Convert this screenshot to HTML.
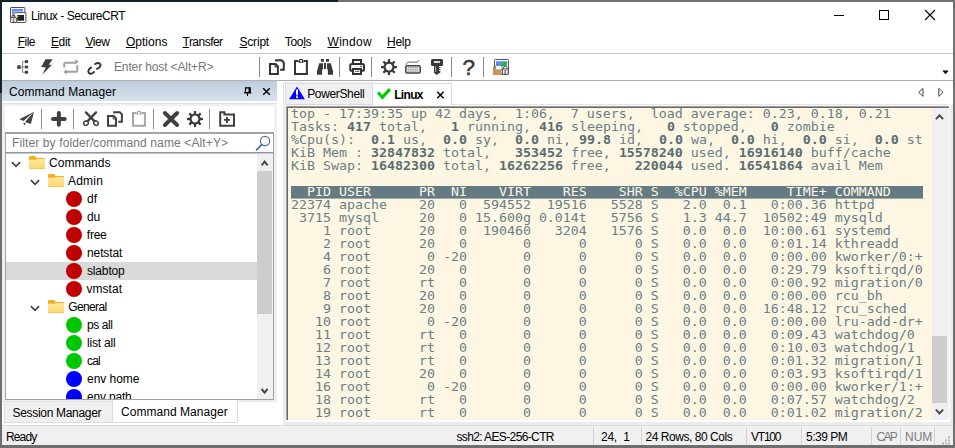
<!DOCTYPE html>
<html lang="en">
<head>
<meta charset="utf-8">
<title>Linux - SecureCRT</title>
<style>
html,body{margin:0;padding:0}
body{width:955px;height:448px;overflow:hidden;position:relative;background:#f0f0f0;font-family:"Liberation Sans",sans-serif;font-size:12px;line-height:14px;color:#000}
div,span,svg{position:absolute;box-sizing:border-box}
.t{white-space:pre;line-height:14px;font-size:12px}
.t u{text-decoration:underline;text-underline-offset:1px}
.sep{width:1px;background:#8c8c8c}
#term{left:288px;top:108px;width:644px;height:312px;background:#fdf6e3;overflow:hidden}
#term div{left:3px;width:640px;height:14.444px;margin:0;font-family:"DejaVu Sans Mono","Liberation Mono",monospace;font-size:13.29px;line-height:14.444px;color:#6a8088;white-space:pre;transform:scaleY(0.9);transform-origin:0 0}
#term b{color:#586e75;font-weight:bold}
#term .h{background:#657b83;color:#fdf6e3;width:632px}
.row{left:6px;width:251px;height:18px}
.dot{width:16px;height:16px;border-radius:50%}
</style>
</head>
<body>
<svg width="0" height="0" style="left:0;top:0"><defs><linearGradient id="fg" x1="0" y1="0" x2="0" y2="1"><stop offset="0" stop-color="#ffe9a6"/><stop offset="1" stop-color="#fdd566"/></linearGradient></defs></svg>
<!-- window frame -->
<div style="left:2px;top:2px;width:951px;height:51px;background:#fff"></div>
<div style="left:2px;top:53px;width:951px;height:1px;background:#c6c6c6"></div>
<div style="left:2px;top:54px;width:951px;height:26px;background:#fff"></div>
<div style="left:2px;top:80px;width:951px;height:1px;background:#b0b0b0"></div>

<!-- app icon -->
<svg style="left:9px;top:6px" width="19" height="19" viewBox="9 6 19 19">
<rect x="10.5" y="7.5" width="14.4" height="11" rx="0.6" fill="#fff" stroke="#505050"/>
<path d="M12 9H23V11.6H13.6V14.5H12Z" fill="#5b8cff"/>
<rect x="14" y="12.6" width="11.9" height="9.9" rx="0.6" fill="#fff" stroke="#505050"/>
<rect x="17.2" y="15" width="6.8" height="5.7" fill="#222"/>
<rect x="17.2" y="15.8" width="1.3" height="1.2" fill="#f5b800"/>
<path d="M12 18v-1.2a1.5 1.5 0 0 1 3 0V18" fill="none" stroke="#505050" stroke-width="1.1"/>
<rect x="10.6" y="17.6" width="5.8" height="4.9" rx="0.5" fill="#f4f4f4" stroke="#505050" stroke-width="1"/>
<rect x="12.7" y="18.7" width="1.6" height="1.2" fill="#444"/><rect x="12.7" y="20.6" width="1.6" height="1.2" fill="#444"/>
</svg>

<!-- window controls -->
<div style="left:834px;top:15px;width:10px;height:1px;background:#000"></div>
<div style="left:879px;top:10px;width:10px;height:10px;border:1px solid #000"></div>
<svg style="left:924px;top:9px" width="12" height="12" viewBox="0 0 12 12"><path d="M1 1l10 10M11 1L1 11" stroke="#000" stroke-width="1.1" fill="none"/></svg>

<!-- toolbar icons -->
<svg style="left:16px;top:58px" width="14" height="18" viewBox="16 58 14 18">
<path d="M20.5 67.2H22.6M22.6 61.7V72.3M22.6 61.7H25M22.6 67H25M22.6 72.3H25" stroke="#8a8a8a" stroke-width="1" fill="none"/>
<rect x="17.2" y="65.3" width="3.5" height="3.6" fill="#444"/>
<rect x="24.9" y="60.2" width="3.2" height="2.9" fill="#444"/>
<rect x="24.9" y="65.6" width="3.2" height="2.8" fill="#444"/>
<rect x="24.9" y="70.8" width="3.2" height="2.9" fill="#444"/>
</svg>
<svg style="left:40px;top:58px" width="15" height="18" viewBox="40 58 15 18">
<path d="M45.4 59.3H52.7L48.7 64.7H52L42.2 74.7L45.9 67.3H41.2Z" fill="#3c3c3c"/>
</svg>
<svg style="left:62px;top:58px" width="19" height="18" viewBox="62 58 19 18">
<path d="M64.2 67.4V63.9a1.2 1.2 0 0 1 1.2-1.2H76" stroke="#a0a0a0" stroke-width="2" fill="none"/>
<path d="M75.3 59.1L78.8 61.7L75.3 64.3Z" fill="#a0a0a0"/>
<path d="M77.3 65.3V70.6a1.2 1.2 0 0 1-1.2 1.2H66" stroke="#a0a0a0" stroke-width="2" fill="none"/>
<path d="M66.7 69.3L63.2 71.9L66.7 74.6Z" fill="#a0a0a0"/>
</svg>
<svg style="left:86px;top:60px" width="17" height="17" viewBox="86 60 17 17">
<path d="M91 67.6C88.4 69.2 87.6 71.6 89 73C90.4 74.4 92.6 73.6 94 71.9" stroke="#333" stroke-width="1.9" fill="none" stroke-linecap="round"/>
<path d="M95.3 63.9C97.4 62.6 99.4 62.8 100.3 64.2C101.2 65.8 99.8 68 96.9 68.8" stroke="#333" stroke-width="1.9" fill="none" stroke-linecap="round"/>
</svg>

<div class="sep" style="left:259px;top:57px;height:20px"></div>
<!-- copy -->
<svg style="left:268px;top:58px" width="19" height="18" viewBox="268 58 19 18">
<path d="M276.1 61.6V60.3H281.6L283.8 62.5V69.8H280.1" stroke="#333" stroke-width="2" fill="none"/>
<path d="M270 64.1H275.6L277.9 66.4V73.9H270Z" stroke="#333" stroke-width="2" fill="#fff"/>
<path d="M275 64.5V67H277.6" stroke="#333" stroke-width="1" fill="none"/>
</svg>
<!-- clipboard -->
<svg style="left:293px;top:58px" width="17" height="18" viewBox="293 58 17 18">
<path d="M298.5 61.1H295V73.9H306.9V61.1H303.5" stroke="#333" stroke-width="2" fill="none"/>
<path d="M298.4 62.7L299.4 59H302.6L303.6 62.7Z" fill="#333"/>
<rect x="300.1" y="60" width="1.8" height="1.8" fill="#fff"/>
</svg>
<!-- binoculars -->
<svg style="left:316px;top:58px" width="19" height="18" viewBox="316 58 19 18">
<path d="M320.9 59H323.9V61.8H320.9ZM326 59H329V61.8H326Z" fill="#3a3a3a"/>
<path d="M319.2 63.2H323V68.6L322.1 70V74.8H317V71Z" fill="#3a3a3a"/>
<path d="M330.8 63.2H327V68.6L327.9 70V74.8H333V71Z" fill="#3a3a3a"/>
<path d="M324 63H326V69H324Z" fill="#3a3a3a"/>
</svg>
<div class="sep" style="left:339px;top:57px;height:20px"></div>
<!-- printer -->
<svg style="left:348px;top:58px" width="19" height="18" viewBox="348 58 19 18">
<path d="M353 63.5V60.1H361V63.5" stroke="#333" stroke-width="2" fill="none"/>
<rect x="350.2" y="64" width="13.8" height="6.8" rx="1.6" fill="#fff" stroke="#333" stroke-width="2"/>
<rect x="353" y="69" width="8" height="5" fill="#fff" stroke="#333" stroke-width="2"/>
<rect x="359.8" y="65.8" width="2.2" height="1" fill="#333"/>
<rect x="355" y="70.8" width="4.4" height="1" fill="#555"/>
</svg>
<div class="sep" style="left:371px;top:57px;height:20px"></div>
<!-- gear -->
<svg style="left:380px;top:58px" width="18" height="18" viewBox="-9 -9.1 18 18">
<g fill="#3a3a3a"><rect x="-1.15" y="-8" width="2.3" height="16"/><rect x="-1.15" y="-8" width="2.3" height="16" transform="rotate(45)"/><rect x="-1.15" y="-8" width="2.3" height="16" transform="rotate(90)"/><rect x="-1.15" y="-8" width="2.3" height="16" transform="rotate(135)"/></g>
<circle r="4.5" fill="#fff" stroke="#3a3a3a" stroke-width="2.2"/>
</svg>
<!-- keyboard -->
<svg style="left:404px;top:59px" width="19" height="16" viewBox="404 59 19 16">
<path d="M406 64.8C406.6 62.8 407.4 62.1 409 62.1H416.8C418 62.1 418.4 61.4 418.6 60.2" stroke="#555" stroke-width="0.9" fill="none"/>
<rect x="405.8" y="65.8" width="14.4" height="7.2" rx="1.3" fill="#e6e6e6" stroke="#444" stroke-width="1.5"/>
<path d="M407.6 67.6h10.8M407.6 69.4h10.8M407.6 71.2h10.8" stroke="#9a9a9a" stroke-width="1" stroke-dasharray="1.3 0.5"/>
</svg>
<!-- key -->
<svg style="left:430px;top:58px" width="15" height="18" viewBox="430 58 15 18">
<path d="M432.5 59.1H441.5a1.5 1.5 0 0 1 1.5 1.5V64.4a1.5 1.5 0 0 1-1.5 1.5H439V67H440.4V68H439V69H440.4V70H439V71H440.4V72.4L436.5 74.9L434 72.8V65.9H432.5a1.5 1.5 0 0 1-1.5-1.5V60.6a1.5 1.5 0 0 1 1.5-1.5Z" fill="#3a3a3a"/>
<rect x="434" y="61.2" width="6.1" height="1.6" fill="#fff"/>
<rect x="435.3" y="66.5" width="0.8" height="5.2" fill="#ddd"/>
</svg>
<div class="sep" style="left:451px;top:57px;height:20px"></div>
<!-- question -->
<span class="t" style="left:462.6px;top:55.8px;font-size:22.5px;line-height:24px;color:#3a3a3a;-webkit-text-stroke:0.55px #3a3a3a;transform:scaleX(1.0);transform-origin:0 0">?</span>
<div class="sep" style="left:483px;top:57px;height:20px"></div>
<!-- coloured icon -->
<svg style="left:492px;top:58px" width="18" height="18" viewBox="492 58 18 18">
<rect x="494.5" y="59.5" width="14" height="14.5" rx="0.8" fill="#fff" stroke="#555"/>
<rect x="496" y="61.2" width="11" height="4.8" fill="#5b8cff"/>
<path d="M495.6 65.4H500.4L502 67V70.2H495.6Z" fill="#fff" stroke="#666" stroke-width="0.7"/>
<path d="M501 64.6L503.4 62.4L506.8 62L507 63.2L502.6 67Z" fill="#00d000"/>
<path d="M493 66.8H494.6V69.6H501.6V75H493Z" fill="#c8965c"/>
<rect x="502.4" y="69" width="5.8" height="5.4" fill="#f4f4f4" stroke="#444" stroke-width="0.9"/>
<path d="M503.6 69v-1.2a1.7 1.7 0 0 1 3.4 0V69" fill="none" stroke="#444" stroke-width="1"/>
<rect x="504.5" y="70.2" width="1.6" height="1.3" fill="#333"/><rect x="504.5" y="72.3" width="1.6" height="1.3" fill="#333"/>
</svg>
<!-- overflow arrow -->
<svg style="left:942px;top:70px" width="7" height="5" viewBox="0 0 7 5"><path d="M0.3 0.5H6.7L3.5 4.3Z" fill="#000"/></svg>

<!-- left panel -->
<div style="left:2px;top:81px;width:275px;height:20px;background:linear-gradient(#bfccdb,#d6e2ef)"></div>
<div style="left:2px;top:101px;width:281px;height:2px;background:#fff"></div>
<div style="left:277px;top:81px;width:6px;height:344px;background:#fff"></div>
<div style="left:2px;top:103px;width:275px;height:1px;background:#e3e3e3"></div>
<!-- pin -->
<svg style="left:243px;top:86px" width="10" height="11" viewBox="243 86 10 11">
<path d="M245.5 87.8H250.2V92.6H245.5Z" fill="none" stroke="#000" stroke-width="1.2"/>
<path d="M249.4 87.5V92.6" stroke="#000" stroke-width="1.6"/>
<path d="M244 92.7H251.2" stroke="#000" stroke-width="1.3"/>
<path d="M247.5 93V96" stroke="#000" stroke-width="1.1"/>
</svg>
<svg style="left:262px;top:87px" width="9" height="9" viewBox="0 0 9 9"><path d="M1.2 1.2L7.8 7.8M7.8 1.2L1.2 7.8" stroke="#000" stroke-width="1.5" fill="none"/></svg>
<!-- white box -->
<div style="left:5px;top:106px;width:269px;height:26px;background:#fff"></div>
<!-- mini toolbar icons -->
<svg style="left:18px;top:110px" width="18" height="18" viewBox="18 110 18 18">
<path d="M34 111.8L19.4 119.3L23.4 120.9Z" fill="#444"/>
<path d="M34 111.8L25 122.1L30.9 124Z" fill="#444"/>
<path d="M23.1 122.4L25.9 123.4L24.4 125.6Z" fill="#444"/>
</svg>
<div class="sep" style="left:41px;top:109px;height:20px"></div>
<svg style="left:50px;top:110px" width="18" height="18" viewBox="50 110 18 18"><path d="M58.85 113V124.8M53 118.9H64.7" stroke="#404040" stroke-width="4" stroke-linecap="round"/></svg>
<div class="sep" style="left:73px;top:109px;height:20px"></div>
<!-- scissors -->
<svg style="left:82px;top:110px" width="18" height="18" viewBox="82 110 18 18">
<path d="M85.9 112.4L94.6 121.4M96 112.4L87.4 121.4" stroke="#404040" stroke-width="2.3" stroke-linecap="round" fill="none"/>
<ellipse cx="86" cy="123.2" rx="2.4" ry="2.1" transform="rotate(-35 86 123.2)" fill="#fff" stroke="#404040" stroke-width="1.5"/>
<ellipse cx="96" cy="123.2" rx="2.4" ry="2.1" transform="rotate(35 96 123.2)" fill="#fff" stroke="#404040" stroke-width="1.5"/>
</svg>
<!-- copy -->
<svg style="left:106px;top:110px" width="18" height="18" viewBox="106 110 18 18">
<path d="M114.2 113.6V112.2H119.8L121.9 114.3V121.8H118.2" stroke="#404040" stroke-width="2" fill="none"/>
<path d="M108 116.1H113.8L116 118.3V125.8H108Z" stroke="#404040" stroke-width="2" fill="#fff"/>
<path d="M113.2 116.5V119H115.8" stroke="#404040" stroke-width="1" fill="none"/>
</svg>
<!-- clipboard gray -->
<svg style="left:131px;top:110px" width="17" height="18" viewBox="131 110 17 18">
<path d="M136.5 113H133V125.8H144.9V113H141.5" stroke="#a6a6a6" stroke-width="2" fill="none"/>
<path d="M136.3 114.6L137.3 111H140.7L141.7 114.6Z" fill="#a6a6a6"/>
<rect x="138.1" y="112" width="1.8" height="1.8" fill="#fff"/>
</svg>
<div class="sep" style="left:153px;top:109px;height:20px"></div>
<svg style="left:161px;top:109px" width="20" height="20" viewBox="161 109 20 20"><path d="M164.9 113L177.1 125M177.1 113L164.9 125" stroke="#404040" stroke-width="4" stroke-linecap="round"/></svg>
<svg style="left:186px;top:110px" width="18" height="18" viewBox="-9 -9 18 18">
<g fill="#3a3a3a"><rect x="-1.15" y="-8" width="2.3" height="16"/><rect x="-1.15" y="-8" width="2.3" height="16" transform="rotate(45)"/><rect x="-1.15" y="-8" width="2.3" height="16" transform="rotate(90)"/><rect x="-1.15" y="-8" width="2.3" height="16" transform="rotate(135)"/></g>
<circle r="4.5" fill="#fff" stroke="#3a3a3a" stroke-width="2.2"/>
</svg>
<div class="sep" style="left:209px;top:109px;height:20px"></div>
<!-- folder plus -->
<svg style="left:218px;top:110px" width="19" height="18" viewBox="218 110 19 18">
<path d="M220.2 125.8V112.2H224.4V114.4H234V125.8Z" fill="#fff" stroke="#404040" stroke-width="2"/>
<path d="M227 116.9V122.9M224 119.9H230" stroke="#404040" stroke-width="1.9"/>
</svg>
<!-- filter box -->
<div style="left:5px;top:132px;width:269px;height:21px;background:#fff;border:1px solid #a3a3a3;border-top-width:2px;border-bottom-color:#8e96a3"></div>
<svg style="left:255px;top:135px" width="17" height="16" viewBox="255 135 17 16">
<circle cx="265" cy="141" r="4.6" fill="#fff" stroke="#4f6fa0" stroke-width="1.2"/>
<path d="M261.6 144.6L256.6 149.8" stroke="#4f6fa0" stroke-width="1.8" stroke-linecap="round"/>
</svg>
<!-- tree box -->
<div style="left:5px;top:153px;width:269px;height:247px;background:#fff;border:1px solid #a0a0a0;border-top:none"></div>
<div style="left:6px;top:153px;width:251px;height:246px;overflow:hidden">
<div class="row" style="left:0;top:109px;background:#d9d9d9"></div>
<svg style="left:5.4px;top:6.5px" width="10" height="8" viewBox="0 0 10 8"><path d="M0.9 2.1L5 6.3L9.1 2.1" stroke="#404040" stroke-width="1.6" fill="none"/></svg>
<svg style="left:23px;top:2.9px" width="16" height="13" viewBox="0 0 16 13"><path d="M0 1.2a1.2 1.2 0 0 1 1.2-1.2H5.6a1.2 1.2 0 0 1 1 0.5L7.8 2H15a1 1 0 0 1 1 1V5H0Z" fill="#f0b21a"/><path d="M0 3.8H6.6L7.8 2.9H16V11.8a1.2 1.2 0 0 1-1.2 1.2H1.2a1.2 1.2 0 0 1-1.2-1.2Z" fill="url(#fg)"/><path d="M0.2 12.2a1.2 1.2 0 0 0 1 0.6H14.8a1.2 1.2 0 0 0 1-0.6" fill="none" stroke="#e8b03c" stroke-width="0.6"/></svg>
<svg style="left:24.4px;top:24.5px" width="10" height="8" viewBox="0 0 10 8"><path d="M0.9 2.1L5 6.3L9.1 2.1" stroke="#404040" stroke-width="1.6" fill="none"/></svg>
<svg style="left:42px;top:20.9px" width="16" height="13" viewBox="0 0 16 13"><path d="M0 1.2a1.2 1.2 0 0 1 1.2-1.2H5.6a1.2 1.2 0 0 1 1 0.5L7.8 2H15a1 1 0 0 1 1 1V5H0Z" fill="#f0b21a"/><path d="M0 3.8H6.6L7.8 2.9H16V11.8a1.2 1.2 0 0 1-1.2 1.2H1.2a1.2 1.2 0 0 1-1.2-1.2Z" fill="url(#fg)"/><path d="M0.2 12.2a1.2 1.2 0 0 0 1 0.6H14.8a1.2 1.2 0 0 0 1-0.6" fill="none" stroke="#e8b03c" stroke-width="0.6"/></svg>
<div class="dot" style="left:60px;top:37.5px;background:#c00000"></div>
<div class="dot" style="left:60px;top:55.5px;background:#c00000"></div>
<div class="dot" style="left:60px;top:73.5px;background:#c00000"></div>
<div class="dot" style="left:60px;top:91.5px;background:#c00000"></div>
<div class="dot" style="left:60px;top:109.5px;background:#c00000"></div>
<div class="dot" style="left:60px;top:127.5px;background:#c00000"></div>
<svg style="left:24.4px;top:150.5px" width="10" height="8" viewBox="0 0 10 8"><path d="M0.9 2.1L5 6.3L9.1 2.1" stroke="#404040" stroke-width="1.6" fill="none"/></svg>
<svg style="left:42px;top:146.9px" width="16" height="13" viewBox="0 0 16 13"><path d="M0 1.2a1.2 1.2 0 0 1 1.2-1.2H5.6a1.2 1.2 0 0 1 1 0.5L7.8 2H15a1 1 0 0 1 1 1V5H0Z" fill="#f0b21a"/><path d="M0 3.8H6.6L7.8 2.9H16V11.8a1.2 1.2 0 0 1-1.2 1.2H1.2a1.2 1.2 0 0 1-1.2-1.2Z" fill="url(#fg)"/><path d="M0.2 12.2a1.2 1.2 0 0 0 1 0.6H14.8a1.2 1.2 0 0 0 1-0.6" fill="none" stroke="#e8b03c" stroke-width="0.6"/></svg>
<div class="dot" style="left:60px;top:163.5px;background:#00c800"></div>
<div class="dot" style="left:60px;top:181.5px;background:#00c800"></div>
<div class="dot" style="left:60px;top:199.5px;background:#00c800"></div>
<div class="dot" style="left:60px;top:217.5px;background:#0000ff"></div>
<div class="dot" style="left:60px;top:235.5px;background:#0000ff"></div>
<span class="t" style="left:43.1px;top:2.5px;letter-spacing:-0.008px">Commands</span>
<span class="t" style="left:61.9px;top:20.5px;letter-spacing:0.246px">Admin</span>
<span class="t" style="left:81.0px;top:38.5px;letter-spacing:-0.016px">df</span>
<span class="t" style="left:81.0px;top:56.5px;letter-spacing:-0.259px">du</span>
<span class="t" style="left:80.8px;top:74.5px;letter-spacing:-0.229px">free</span>
<span class="t" style="left:81.0px;top:92.5px;letter-spacing:-0.105px">netstat</span>
<span class="t" style="left:81.0px;top:110.5px;letter-spacing:-0.159px">slabtop</span>
<span class="t" style="left:80.6px;top:128.5px;letter-spacing:0.011px">vmstat</span>
<span class="t" style="left:62.2px;top:146.5px;letter-spacing:-0.617px">General</span>
<span class="t" style="left:81.0px;top:164.5px;letter-spacing:-0.423px">ps all</span>
<span class="t" style="left:81.0px;top:182.5px;letter-spacing:-0.181px">list all</span>
<span class="t" style="left:81.0px;top:200.5px;letter-spacing:-0.797px">cal</span>
<span class="t" style="left:81.0px;top:218.5px;letter-spacing:-0.029px">env home</span>
<span class="t" style="left:81.0px;top:236.5px;letter-spacing:-0.185px">env path</span>
</div>
<!-- tree scrollbar -->
<div style="left:257px;top:154px;width:16px;height:245px;background:#f0f0f0"></div>
<div style="left:6px;top:153px;width:267px;height:1px;background:#c6cad0"></div>
<div style="left:257px;top:171px;width:15px;height:143px;background:#cdcdcd"></div>
<svg style="left:260px;top:159px" width="10" height="8" viewBox="0 0 10 8"><path d="M1.6 6.4L4.6 2.6L7.6 6.4" stroke="#444" stroke-width="1.9" fill="none"/></svg>
<svg style="left:260px;top:387px" width="10" height="8" viewBox="0 0 10 8"><path d="M1.6 1.8L4.6 5.6L7.6 1.8" stroke="#444" stroke-width="1.9" fill="none"/></svg>
<!-- bottom tabs -->
<div style="left:2px;top:402px;width:281px;height:23px;background:#fff"></div>
<div style="left:2px;top:401px;width:275px;height:1px;background:#e6e6e6"></div>
<div style="left:4px;top:402px;width:109px;height:21px;background:#f0f0f0;border:1px solid #dcdcdc;border-top:none"></div>
<div style="left:112px;top:400px;width:126px;height:23px;background:#fff;border:1px solid #dcdcdc;border-top:none"></div>

<!-- tab strip -->
<div style="left:283px;top:81px;width:670px;height:344px;background:#fff"></div>
<div style="left:283px;top:82px;width:1px;height:24px;background:#e3e3e3"></div>
<div style="left:284px;top:81px;width:88px;height:3px;background:#f4f4f4"></div>
<div style="left:285px;top:83px;width:88px;height:22px;background:#f0f0f0;border:1px solid #dadada"></div>
<div style="left:372px;top:83px;width:80px;height:23px;background:#fff;border:1px solid #dadada;border-bottom:none"></div>
<div style="left:452px;top:104px;width:497px;height:1px;background:#e6e6e6"></div>
<!-- warning triangle -->
<svg style="left:288px;top:86px" width="18" height="14" viewBox="288 86 18 14">
<path d="M297 86.6L304.9 99.3H289.1Z" fill="#0000ff"/>
<path d="M295.9 89.6H298.1L297.8 95.6H296.2Z" fill="#fff"/><rect x="296" y="96.4" width="2" height="1.7" fill="#fff"/>
</svg>
<!-- check -->
<svg style="left:376px;top:87px" width="16" height="14" viewBox="376 87 16 14">
<path d="M376.9 93.6L379 91.4L382.3 94.9L388.8 88.1L391 90.3L382.4 99.7Z" fill="#00cc00"/>
</svg>
<svg style="left:436px;top:91px" width="9" height="8" viewBox="0 0 9 8"><path d="M1.2 0.8L7.6 7.2M7.6 0.8L1.2 7.2" stroke="#000" stroke-width="1.4" fill="none"/></svg>
<!-- tab scroll arrows -->
<svg style="left:917px;top:87px" width="8" height="11" viewBox="0 0 8 11"><path d="M6 1.4L1.7 5.4L6 9.4Z" fill="#fff" stroke="#444" stroke-width="1"/></svg>
<svg style="left:937px;top:87px" width="8" height="11" viewBox="0 0 8 11"><path d="M1.8 1.4L6.1 5.4L1.8 9.4Z" fill="#fff" stroke="#444" stroke-width="1"/></svg>

<!-- terminal -->
<div style="left:283px;top:105px;width:670px;height:320px;background:#ececec"></div>
<div style="left:286px;top:105px;width:664px;height:317px;background:#fff"></div>
<div style="left:284px;top:105px;width:666px;height:1px;background:#f6f6f6"></div>
<div style="left:286px;top:106px;width:663px;height:314px;background:#a0a0a0"></div>
<div style="left:287px;top:107px;width:662px;height:313px;background:#696969"></div>
<div id="term">
<div style="top:0.3px">top - 17:39:35 up 42 days,  1:06,  7 users,  load average: 0.23, 0.18, 0.21</div>
<div style="top:13.3px">Tasks: <b>417</b> total,   <b>1</b> running, <b>416</b> sleeping,   <b>0</b> stopped,   <b>0</b> zombie</div>
<div style="top:26.3px">%Cpu(s):  <b>0.1</b> us,  <b>0.0</b> sy,  <b>0.0</b> ni, <b>99.8</b> id,  <b>0.0</b> wa,  <b>0.0</b> hi,  <b>0.0</b> si,  <b>0.0</b> st</div>
<div style="top:39.3px">KiB Mem : <b>32847832</b> total,   <b>353452</b> free, <b>15578240</b> used, <b>16916140</b> buff/cache</div>
<div style="top:52.3px">KiB Swap: <b>16482300</b> total, <b>16262256</b> free,   <b>220044</b> used. <b>16541864</b> avail Mem</div>
<div class="h" style="top:78.3px">  PID USER      PR  NI    VIRT    RES    SHR S  %CPU %MEM     TIME+ COMMAND    </div>
<div style="top:91.3px">22374 apache    20   0  594552  19516   5528 S   2.0  0.1   0:00.36 httpd</div>
<div style="top:104.3px"> 3715 mysql     20   0 15.600g 0.014t   5756 S   1.3 44.7  10502:49 mysqld</div>
<div style="top:117.3px">    1 root      20   0  190460   3204   1576 S   0.0  0.0  10:00.61 systemd</div>
<div style="top:130.3px">    2 root      20   0       0      0      0 S   0.0  0.0   0:01.14 kthreadd</div>
<div style="top:143.3px">    4 root       0 -20       0      0      0 S   0.0  0.0   0:00.00 kworker/0:+</div>
<div style="top:156.3px">    6 root      20   0       0      0      0 S   0.0  0.0   0:29.79 ksoftirqd/0</div>
<div style="top:169.3px">    7 root      rt   0       0      0      0 S   0.0  0.0   0:00.92 migration/0</div>
<div style="top:182.3px">    8 root      20   0       0      0      0 S   0.0  0.0   0:00.00 rcu_bh</div>
<div style="top:195.3px">    9 root      20   0       0      0      0 S   0.0  0.0  16:48.12 rcu_sched</div>
<div style="top:208.3px">   10 root       0 -20       0      0      0 S   0.0  0.0   0:00.00 lru-add-dr+</div>
<div style="top:221.3px">   11 root      rt   0       0      0      0 S   0.0  0.0   0:09.43 watchdog/0</div>
<div style="top:234.3px">   12 root      rt   0       0      0      0 S   0.0  0.0   0:10.03 watchdog/1</div>
<div style="top:247.3px">   13 root      rt   0       0      0      0 S   0.0  0.0   0:01.32 migration/1</div>
<div style="top:260.3px">   14 root      20   0       0      0      0 S   0.0  0.0   0:03.93 ksoftirqd/1</div>
<div style="top:273.3px">   16 root       0 -20       0      0      0 S   0.0  0.0   0:00.00 kworker/1:+</div>
<div style="top:286.3px">   18 root      rt   0       0      0      0 S   0.0  0.0   0:07.57 watchdog/2</div>
<div style="top:299.3px">   19 root      rt   0       0      0      0 S   0.0  0.0   0:01.02 migration/2</div>
</div>
<!-- terminal scrollbar -->
<div style="left:932px;top:108px;width:17px;height:312px;background:#f0f0f0"></div>
<div style="left:932px;top:336px;width:15px;height:67px;background:#cdcdcd"></div>
<svg style="left:934px;top:113px" width="11" height="8" viewBox="0 0 11 8"><path d="M1.9 6.2L5.5 2.4L9.1 6.2" stroke="#444" stroke-width="1.9" fill="none"/></svg>
<svg style="left:934px;top:408px" width="11" height="8" viewBox="0 0 11 8"><path d="M1.9 1.6L5.5 5.4L9.1 1.6" stroke="#444" stroke-width="1.9" fill="none"/></svg>

<!-- status bar -->
<div style="left:2px;top:425px;width:951px;height:21px;background:#f0f0f0"></div>
<div style="left:2px;top:425px;width:951px;height:1px;background:#dcdcdc"></div>
<div class="sep" style="left:593px;top:427px;height:18px;background:#d2d2d2"></div>
<div class="sep" style="left:641px;top:427px;height:18px;background:#d2d2d2"></div>
<div class="sep" style="left:746px;top:427px;height:18px;background:#d2d2d2"></div>
<div class="sep" style="left:801px;top:427px;height:18px;background:#d2d2d2"></div>
<div class="sep" style="left:871px;top:427px;height:18px;background:#d2d2d2"></div>
<div class="sep" style="left:900px;top:427px;height:18px;background:#d2d2d2"></div>
<div class="sep" style="left:934px;top:427px;height:18px;background:#d2d2d2"></div>
<svg style="left:942px;top:436px" width="9" height="9" viewBox="0 0 9 9"><g fill="#b4b4b4"><rect x="6" y="0.4" width="2" height="2"/><rect x="6" y="3.4" width="2" height="2"/><rect x="6" y="6.4" width="2" height="2"/><rect x="3" y="3.4" width="2" height="2"/><rect x="3" y="6.4" width="2" height="2"/><rect x="0" y="6.4" width="2" height="2"/></g></svg>

<span class="t" style="left:31.0px;top:8.5px;color:#000;letter-spacing:-0.458px;">Linux - SecureCRT</span>
<span class="t" style="left:17.8px;top:35.3px;color:#000;letter-spacing:-0.548px;"><u>F</u>ile</span>
<span class="t" style="left:51.0px;top:35.3px;color:#000;letter-spacing:-0.396px;"><u>E</u>dit</span>
<span class="t" style="left:85.5px;top:35.3px;color:#000;letter-spacing:-0.432px;"><u>V</u>iew</span>
<span class="t" style="left:125.9px;top:35.3px;color:#000;letter-spacing:0.040px;"><u>O</u>ptions</span>
<span class="t" style="left:182.5px;top:35.3px;color:#000;letter-spacing:-0.519px;"><u>T</u>ransfer</span>
<span class="t" style="left:239.5px;top:35.3px;color:#000;letter-spacing:-0.198px;"><u>S</u>cript</span>
<span class="t" style="left:284.8px;top:35.3px;color:#000;letter-spacing:-0.329px;">Too<u>l</u>s</span>
<span class="t" style="left:327.5px;top:35.3px;color:#000;letter-spacing:0.302px;"><u>W</u>indow</span>
<span class="t" style="left:387.0px;top:35.3px;color:#000;letter-spacing:-0.263px;"><u>H</u>elp</span>
<span class="t" style="left:114.0px;top:60.0px;color:#767676;letter-spacing:-0.131px;">Enter host &lt;Alt+R&gt;</span>
<span class="t" style="left:9.0px;top:85.0px;color:#000;letter-spacing:0.067px;">Command Manager</span>
<span class="t" style="left:12.0px;top:136.0px;color:#767676;letter-spacing:0.118px;">Filter by folder/command name &lt;Alt+Y&gt;</span>
<span class="t" style="left:12.5px;top:406.0px;color:#000;letter-spacing:-0.314px;">Session Manager</span>
<span class="t" style="left:121.1px;top:404.6px;color:#000;letter-spacing:0.038px;">Command Manager</span>
<span class="t" style="left:6.0px;top:429.7px;color:#000;letter-spacing:-0.872px;">Ready</span>
<span class="t" style="left:456.5px;top:429.7px;color:#000;letter-spacing:-0.628px;">ssh2: AES-256-CTR</span>
<span class="t" style="left:600.9px;top:429.7px;color:#000;letter-spacing:-0.186px;">24,  1</span>
<span class="t" style="left:645.5px;top:429.7px;color:#000;letter-spacing:-0.456px;">24 Rows, 80 Cols</span>
<span class="t" style="left:751.0px;top:429.7px;color:#000;letter-spacing:-1.215px;">VT100</span>
<span class="t" style="left:806.1px;top:429.7px;color:#000;letter-spacing:-0.517px;">5:39 PM</span>
<span class="t" style="left:876.5px;top:429.9px;color:#7d7d7d;letter-spacing:-1.744px;">CAP</span>
<span class="t" style="left:905.1px;top:429.9px;color:#7d7d7d;letter-spacing:-0.064px;">NUM</span>
<span class="t" style="left:307.2px;top:87.2px;color:#000;letter-spacing:-0.356px;">PowerShell</span>
<span class="t" style="left:394.2px;top:87.6px;color:#000;letter-spacing:-0.675px;font-weight:bold;">Linux</span>
<!-- outer frame -->
<div style="left:0;top:0;width:338px;height:2px;background:#0f2027"></div>
<div style="left:338px;top:0;width:617px;height:2px;background:#707070"></div>
<div style="left:0;top:0;width:2px;height:93px;background:#13252c"></div>
<div style="left:0;top:93px;width:2px;height:355px;background:#6e6e6e"></div>
<div style="left:953px;top:0;width:2px;height:448px;background:#707070"></div>
<div style="left:0;top:445px;width:955px;height:3px;background:#6e6e6e"></div>

</body>
</html>
